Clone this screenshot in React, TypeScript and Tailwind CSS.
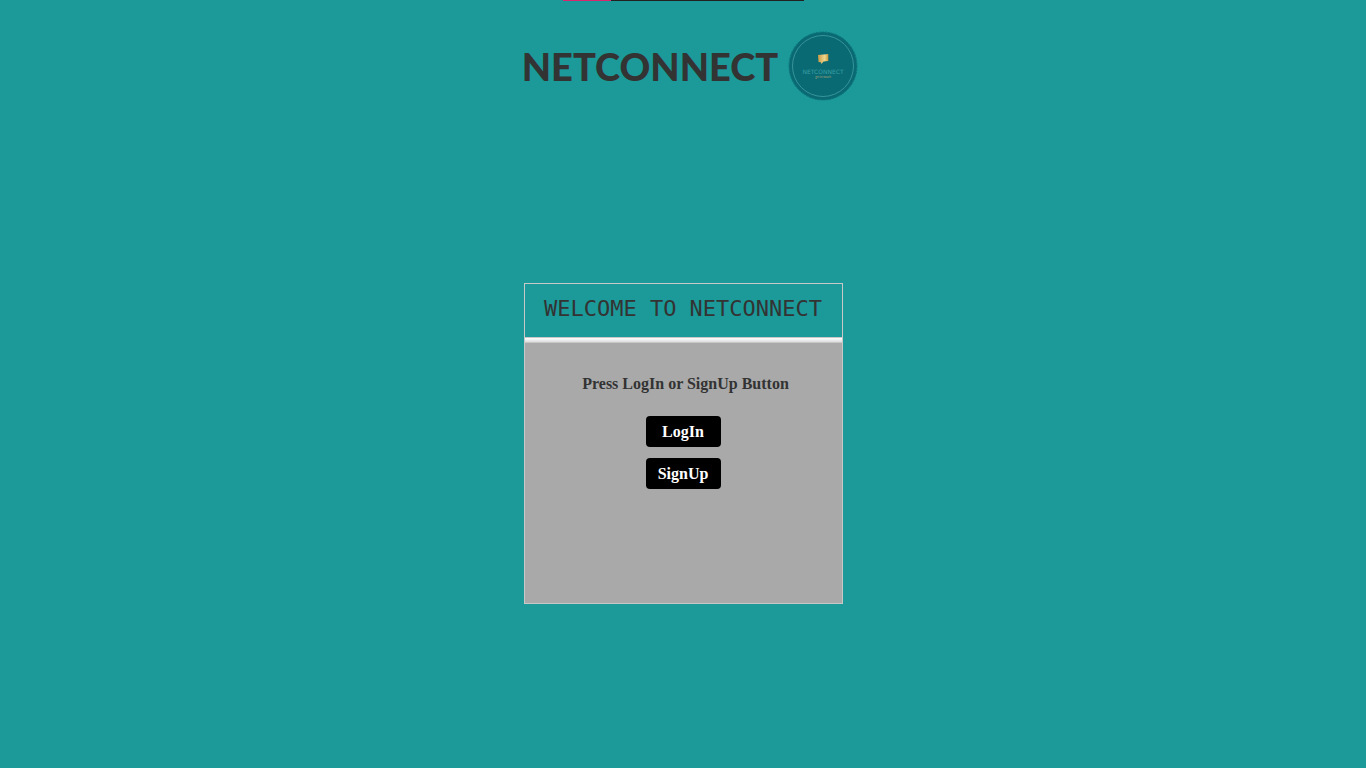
function Logo() {
  return (
    <svg viewBox="0 0 70 70" className="size-[70px] shrink-0" role="img" aria-label="NetConnect logo">
      <defs>
        <linearGradient id="gold" x1="0" y1="0" x2="1" y2="0">
          <stop offset="0" stopColor="#c99b45" />
          <stop offset="0.65" stopColor="#f0d78d" />
          <stop offset="1" stopColor="#c9993f" />
        </linearGradient>
      </defs>
      <circle cx="35" cy="35" r="34" fill="#096a73" stroke="#0d757c" strokeWidth="1" strokeDasharray="2 1" />
      <circle cx="35" cy="35" r="30.5" fill="none" stroke="#37949a" strokeWidth="1" />
      <path d="M30 24 L40.3 23 V30 L35.5 30.5 L33.5 33 L32.8 31.2 L30.5 31 Z" fill="url(#gold)" />
      <text
        x="35"
        y="42.5"
        textAnchor="middle"
        fontFamily="'DejaVu Sans', sans-serif"
        fontSize="6"
        fill="#3a9fa4"
      >
        NETCONNECT
      </text>
      <text x="35" y="47" textAnchor="middle" fontFamily="Lato, sans-serif" fontSize="3" fill="#a9a477">
        get in touch
      </text>
    </svg>
  );
}

const buttonClass =
  "h-[31px] w-[75px] cursor-pointer rounded-[4px] bg-black text-base leading-5 font-bold text-white hover:bg-neutral-800";

export default function App() {
  return (
    <div className="flex min-h-screen flex-col items-center bg-[#1c9999] font-['Baskerville_Old_Face','Liberation_Serif',serif] text-[#333333]">
      <div className="flex h-px w-[241px] bg-[#222222]">
        <div className="w-1/5 bg-[#d9266f]" />
      </div>

      <header className="flex items-center gap-[10px] pt-[30px] pl-[14px]">
        <h1 className="font-['Broadway','Lato',sans-serif] text-[38px] leading-[40px] font-black">NETCONNECT</h1>
        <Logo />
      </header>

      <main className="mt-[182px] w-[319px] max-w-full border border-[#c8c8c8]">
        <h2 className="pt-3 pb-4 text-center font-['OCR_A_Extended','DejaVu_Sans_Mono',monospace] text-[22px] leading-[25px]">
          WELCOME TO NETCONNECT
        </h2>
        <div className="h-[6px] border-y border-[#c8c8c8] bg-linear-to-b from-white to-[#dddddd]" />
        <section className="flex flex-col items-center gap-[11px] bg-[#a9a9a9] pt-[31px] pb-[114px]">
          <p className="mb-[11px] pl-[5px] text-base leading-5 font-bold">Press LogIn or SignUp Button</p>
          <button type="button" className={buttonClass}>
            LogIn
          </button>
          <button type="button" className={buttonClass}>
            SignUp
          </button>
        </section>
      </main>
    </div>
  );
}
